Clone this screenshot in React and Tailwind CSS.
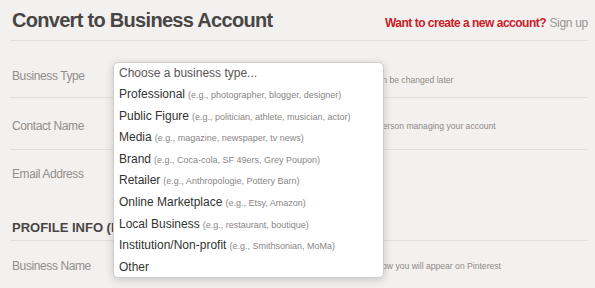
import React from "react";

const options = [
  ["Professional", "(e.g., photographer, blogger, designer)"],
  ["Public Figure", "(e.g., politician, athlete, musician, actor)"],
  ["Media", "(e.g., magazine, newspaper, tv news)"],
  ["Brand", "(e.g., Coca-cola, SF 49ers, Grey Poupon)"],
  ["Retailer", "(e.g., Anthropologie, Pottery Barn)"],
  ["Online Marketplace", "(e.g., Etsy, Amazon)"],
  ["Local Business", "(e.g., restaurant, boutique)"],
  ["Institution/Non-profit", "(e.g., Smithsonian, MoMa)"],
  ["Other", ""],
];

function Helper({ prefixW, prefix, rest, pt }) {
  return (
    <div className={"flex items-baseline text-[8.6px] leading-[12px] text-[#8f8a87] whitespace-nowrap " + pt}>
      <span className="text-right" style={{ width: prefixW }}>{prefix}</span>
      <span className="whitespace-pre">{rest}</span>
    </div>
  );
}

const label = "w-[108px] text-[12px] leading-[16px] tracking-[-0.4px] text-[#928d8a]";

export default function App() {
  return (
    <div className="relative w-[595px] h-[288px] overflow-hidden bg-[#f2f1f0] font-['Liberation_Sans',Arial,sans-serif]">
      <div className="ml-[10px] w-[578px]">
        <div className="flex justify-between items-baseline h-[41px] pt-[8px] pl-[2px] border-b border-[#e1dfdc]">
          <h1 className="text-[20px] leading-[24px] font-bold tracking-[-0.7px] text-[#4a4545]">
            Convert to Business Account
          </h1>
          <div className="text-[12px] leading-[16px]">
            <span className="font-bold text-[#cb2027] tracking-[-0.5px]">Want to create a new account?</span>{" "}
            <span className="text-[#9a9696] tracking-[-0.3px]">Sign up</span>
          </div>
        </div>

        <div className="flex items-start h-[57px] pt-[27px] pl-[2px] border-b border-[#e1dfdc]">
          <div className={label}>Business Type</div>
          <Helper pt="pt-[6px]" prefixW="267px" prefix="Your business type can" rest=" be changed later" />
        </div>

        <div className="flex items-start h-[52px] pt-[20px] pl-[2px] border-b border-[#e1dfdc]">
          <div className={label}>Contact Name</div>
          <Helper pt="pt-[2px]" prefixW="284px" prefix="The name of the person" rest=" managing your account" />
        </div>

        <div className="h-[40px] pt-[16px] pl-[2px]">
          <div className={label}>Email Address</div>
        </div>

        <div className="h-[51px] pt-[30px] pl-[2px] border-b border-[#e1dfdc]">
          <div className="whitespace-nowrap text-[13px] leading-[16px] font-bold text-[#4a4545]">
            PROFILE INFO (REQUIRED)
          </div>
        </div>

        <div className="flex items-start pt-[17px] pl-[2px]">
          <div className={label}>Business Name</div>
          <Helper pt="pt-[2px]" prefixW="273px" prefix="This is how" rest=" you will appear on Pinterest" />
        </div>
      </div>

      <div className="absolute left-[113px] top-[62px] w-[271px] h-[216px] bg-white border border-[#cfcdcb] rounded-[5px] shadow-[0_2px_8px_rgba(0,0,0,0.18)]">
        <div className="h-[21.6px] flex items-center pl-[5px] pb-[2px] text-[12px] text-[#5a5555] whitespace-nowrap">
          Choose a business type...
        </div>
        {options.map(([name, hint]) => (
          <div key={name} className="h-[21.6px] flex items-baseline pt-[2.5px] pl-[5px] whitespace-nowrap">
            <span className="text-[12px] leading-[14px] text-[#333]">{name}</span>
            {hint && <span className="ml-[3px] text-[9px] text-[#8a8686]">{hint}</span>}
          </div>
        ))}
      </div>
    </div>
  );
}
